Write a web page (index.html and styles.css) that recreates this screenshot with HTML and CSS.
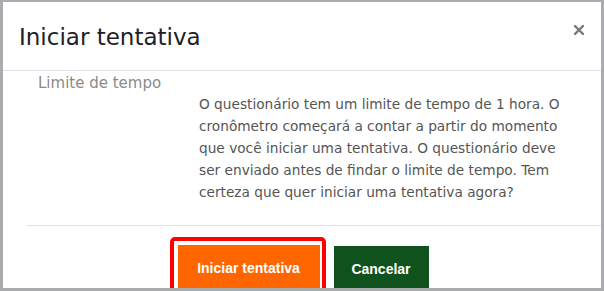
FILE: index.html
```html
<!DOCTYPE html>
<html lang="pt-BR">
<head>
    <meta charset="UTF-8">
    <title>Iniciar tentativa</title>
    <link rel="stylesheet" href="styles.css">
</head>
<body>
    <div class="frame">
        <div class="modal">
            <div class="modal-header">
                <h2 class="modal-title">Iniciar tentativa</h2>
                <button class="close" aria-label="Fechar">
                    <svg width="10" height="10" viewBox="0 0 10 10">
                        <path d="M1 1 L9 9 M9 1 L1 9" stroke="#7a7a7a" stroke-width="2.4" stroke-linecap="square"/>
                    </svg>
                </button>
            </div>
            <div class="modal-body">
                <div class="field-label">Limite de tempo</div>
                <p class="field-text">O questionário tem um limite de tempo de 1 hora. O cronômetro começará a contar a partir do momento que você iniciar uma tentativa. O questionário deve ser enviado antes de findar o limite de tempo. Tem certeza que quer iniciar uma tentativa agora?</p>
            </div>
            <div class="modal-footer">
                <div class="highlight">
                    <button class="btn btn-start">Iniciar tentativa</button>
                </div>
                <button class="btn btn-cancel">Cancelar</button>
            </div>
        </div>
    </div>
</body>
</html>
```

FILE: styles.css
```css
body {
    margin: 0;
    background-color: #ffffff;
    font-family: "DejaVu Sans", sans-serif;
}
.frame {
    width: 604px;
    height: 291px;
    box-sizing: border-box;
    border-style: solid;
    border-color: #a9abae;
    border-width: 2px 3px 3px 3px;
    overflow: hidden;
    background-color: #fff;
}
.modal {
    height: 100%;
}
.modal-header {
    display: flex;
    justify-content: space-between;
    align-items: flex-start;
    height: 68px;
    border-bottom: 1px solid #dee2e6;
    padding: 0 17px 0 16px;
}
.modal-title {
    margin: 22px 0 0 0;
    font-weight: normal;
    font-size: 23px;
    color: #1d2125;
}
.close {
    background: none;
    border: none;
    padding: 0;
    margin-top: 21px;
    cursor: pointer;
}
.modal-body {
    padding: 2px 10px 0 35px;
    height: 152px;
}
.field-label {
    font-size: 15px;
    color: #8a8a8a;
    line-height: 20px;
}
.field-text {
    margin: 0 0 0 161px;
    max-width: 372px;
    font-size: 13.7px;
    line-height: 22px;
    color: #555;
}
.modal-footer {
    margin-left: 24px;
    border-top: 1px solid #dee2e6;
    display: flex;
    justify-content: center;
    align-items: flex-start;
    gap: 8px;
    padding: 11px 30px 0 0;
}
.highlight {
    border: 4px solid #ff0000;
    border-radius: 5px;
    padding: 4px 2px 0 4px;
    background: #fff;
}
.btn {
    font-family: "Liberation Sans", Arial, sans-serif;
    font-weight: bold;
    font-size: 14px;
    color: #fff;
    border: none;
    border-radius: 0;
    height: 46px;
    cursor: pointer;
}
.btn-start {
    background-color: #ff6600;
    width: 142px;
}
.btn-cancel {
    background-color: #10521d;
    width: 95px;
    margin-top: 9px;
}
```
